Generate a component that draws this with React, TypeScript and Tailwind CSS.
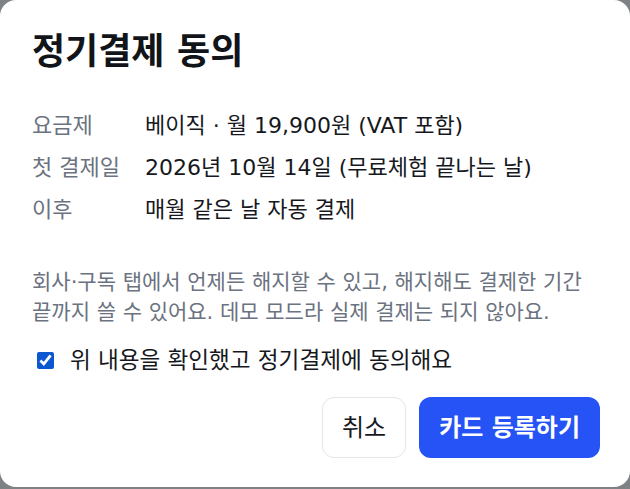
import { useState } from "react";

const rows = [
  { label: "요금제", value: "베이직 · 월 19,900원 (VAT 포함)" },
  { label: "첫 결제일", value: "2026년 10월 14일 (무료체험 끝나는 날)" },
  { label: "이후", value: "매월 같은 날 자동 결제" },
];

export default function App() {
  const [agreed, setAgreed] = useState(true);

  return (
    <div
      className="min-h-screen bg-[#7f8285]"
      style={{ fontFamily: '"DejaVu Sans", "Noto Sans CJK KR", sans-serif' }}
    >
      <div className="w-full h-[487px] bg-white rounded-2xl pl-8 pr-[30px] pt-[30px] flex flex-col">
        <h2 className="text-[36px] leading-[44px] font-bold text-[#111418]">정기결제 동의</h2>

        <div className="mt-[37px] flex flex-col gap-[12px]">
          {rows.map((r) => (
            <div key={r.label} className="flex items-center text-[22px] leading-[30px]">
              <span className="w-[113px] shrink-0 text-[#6b7280]">{r.label}</span>
              <span className="text-[#16181d]">{r.value}</span>
            </div>
          ))}
        </div>

        <p className="mt-[42px] text-[21px] leading-[30px] text-[#6b7280] whitespace-nowrap">
          회사·구독 탭에서 언제든 해지할 수 있고, 해지해도 결제한 기간
          <br />
          끝까지 쓸 수 있어요. 데모 모드라 실제 결제는 되지 않아요.
        </p>

        <label className="mt-[18px] flex items-center gap-[16px] pl-[5px] text-[22.6px] leading-[30px] text-[#16181d] cursor-pointer">
          <input
            type="checkbox"
            checked={agreed}
            onChange={(e) => setAgreed(e.target.checked)}
            className="w-[17px] h-[17px] m-0 accent-[#0b57d0]"
          />
          위 내용을 확인했고 정기결제에 동의해요
        </label>

        <div className="mt-auto mb-[29px] flex justify-end gap-[13px]">
          <button className="h-[61px] px-[19px] rounded-xl border border-[#e3e5ea] bg-white text-[24px] text-[#16181d]">
            취소
          </button>
          <button className="h-[61px] px-[20px] rounded-xl bg-[#2553f5] text-[24px] font-bold text-white">
            카드 등록하기
          </button>
        </div>
      </div>
    </div>
  );
}
